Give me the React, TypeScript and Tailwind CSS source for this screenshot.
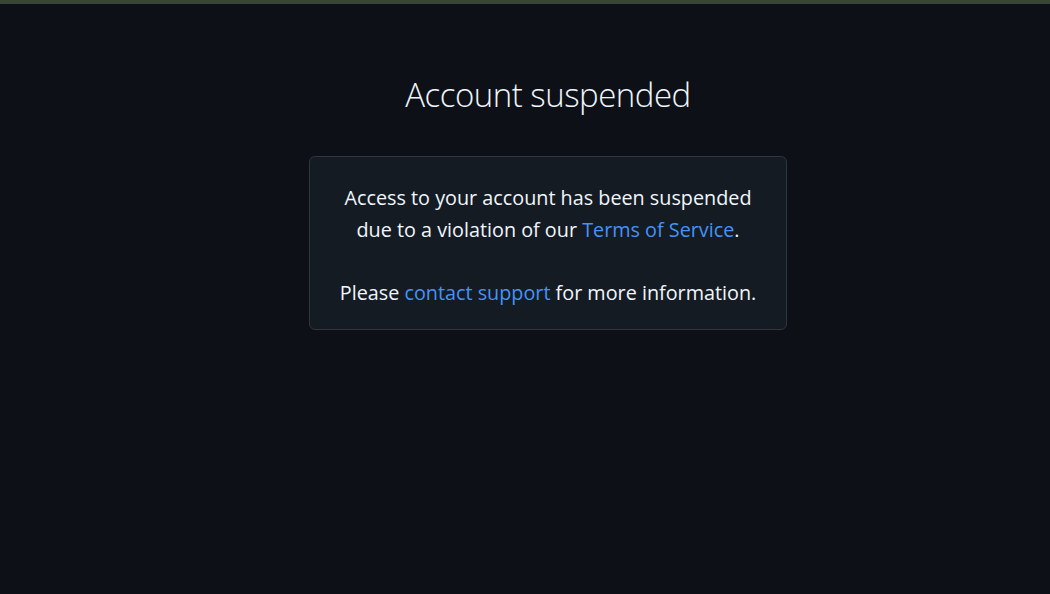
import React from 'react';

export default function App() {
  return (
    <div className="min-h-screen bg-[#0d1117] text-[#f0f6fc]" style={{ fontFamily: '"Open Sans", "Noto Sans", sans-serif' }}>
      <div className="h-[4px] bg-[#384634]" />
      <main className="flex flex-col items-center pt-[66px] pl-[46px]">
        <h1 className="text-[33px] leading-[50px] font-light tracking-[-0.5px]">Account suspended</h1>
        <div className="mt-[36px] w-[478px] rounded-md border border-[#30363d] bg-[#151b23] px-4 pt-[25px] pb-[21px] text-center text-[19.8px] leading-[31.5px]">
          <p>
            Access to your account has been suspended
            <br />
            due to a violation of our <a href="#" className="text-[#4493f8]">Terms of Service</a>.
          </p>
          <p className="mt-[31.5px]">
            Please <a href="#" className="text-[#4493f8]">contact support</a> for more information.
          </p>
        </div>
      </main>
    </div>
  );
}
